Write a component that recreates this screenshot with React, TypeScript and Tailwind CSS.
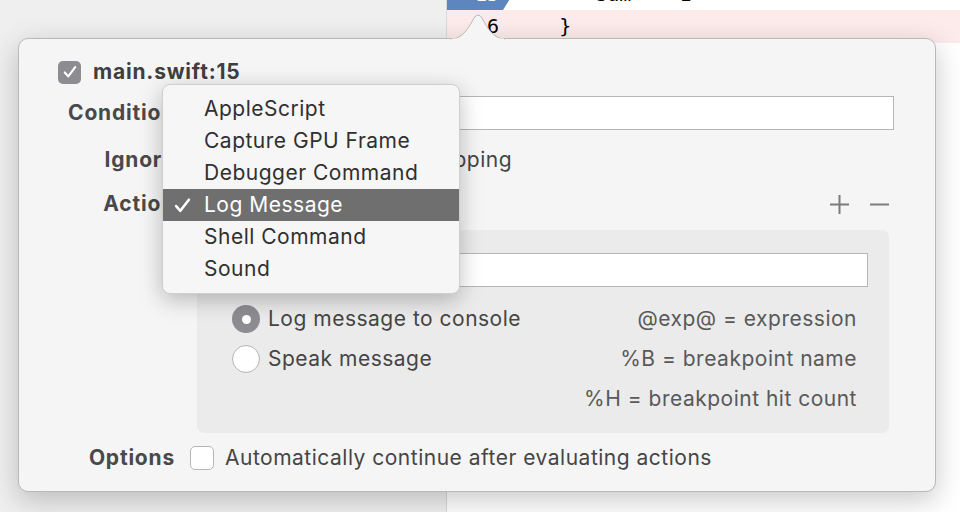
const MENU_ITEMS = [
  "AppleScript",
  "Capture GPU Frame",
  "Debugger Command",
  "Log Message",
  "Shell Command",
  "Sound",
];

const SELECTED = "Log Message";

export default function App() {
  return (
    <div className="relative flex h-[512px] w-[960px] overflow-hidden bg-white font-['Inter',sans-serif] text-[21px] leading-[24px] tracking-[0.5px] text-[#454545]">
      <div className="w-[447px] shrink-0 border-r border-[#d9d9d9] bg-[#efefef]" />
      <Editor />
      <Popover />
    </div>
  );
}

function Editor() {
  return (
    <div className="flex flex-1 flex-col font-['DejaVu_Sans_Mono',monospace] text-[20px] leading-[32px] tracking-normal text-black">
      <div className="-mt-[22px] flex h-[32px]">
        <div className="relative w-[64px] shrink-0">
          <svg className="absolute inset-0" width="66" height="32" viewBox="0 0 66 32">
            <path d="M0 0 H56 L66 16 L56 32 H0 Z" fill="#5d86bf" />
          </svg>
          <span className="relative block pr-[12px] text-right text-white">15</span>
        </div>
        <pre className="pl-[12px] font-['DejaVu_Sans_Mono',monospace]">{"      sum += 1"}</pre>
      </div>
      <div className="flex h-[33px] bg-[#fcebea]">
        <span className="block w-[64px] shrink-0 pr-[12px] text-right">16</span>
        <pre className="font-['DejaVu_Sans_Mono',monospace]">{"    }"}</pre>
      </div>
    </div>
  );
}

function Popover() {
  return (
    <div className="absolute left-[18px] top-[38px] h-[454px] w-[918px] rounded-[10px] border border-[#b9b9b9] bg-[#f5f5f5] shadow-[0_8px_28px_rgba(0,0,0,0.22)]">
      <svg
        className="absolute -top-[26px] left-[432px]"
        width="54"
        height="27"
        viewBox="0 0 54 27"
      >
        <path
          d="M0 26 C12 26 18 14 23 5 Q27 -1 31 5 C36 14 42 26 54 26 Z"
          fill="#f5f5f5"
        />
        <path
          d="M0 26 C12 26 18 14 23 5 Q27 -1 31 5 C36 14 42 26 54 26"
          fill="none"
          stroke="#b9b9b9"
          strokeWidth="1"
        />
        <rect x="1" y="25.5" width="52" height="2" fill="#f5f5f5" />
      </svg>

      <div className="flex flex-col pl-[39px] pt-[21px]">
        <div className="flex h-[24px] items-center gap-[12px]">
          <span className="flex h-[23px] w-[23px] items-center justify-center rounded-[5px] bg-[#8d8d91]">
            <CheckIcon className="h-[14px] w-[14px]" color="#ffffff" />
          </span>
          <span className="font-bold tracking-[0.8px] text-[#3f3f3f]">main.swift:15</span>
        </div>
      </div>

      <div className="mt-[12px] grid grid-cols-[156px_1fr] items-center gap-x-[15px] pr-[41px]">
        <Label>Condition</Label>
        <div className="h-[34px] border border-[#b6b6b6] bg-white" />
      </div>

      <div className="mt-[13px] grid grid-cols-[156px_1fr] items-center gap-x-[15px] pr-[41px]">
        <Label>Ignore</Label>
        <div className="flex h-[34px] items-center">
          <div className="h-[30px] w-[66px] border border-[#b6b6b6] bg-white" />
          <div className="ml-[4px] h-[30px] w-[16px] rounded-[4px] border border-[#c4c4c4] bg-white" />
          <span className="ml-[9px]">times before stopping</span>
        </div>
      </div>

      <div className="mt-[11px] grid grid-cols-[156px_1fr] items-center gap-x-[15px] pr-[46px]">
        <Label>Action</Label>
        <div className="flex h-[32px] items-center">
          <div className="h-[28px] w-[180px] rounded-[5px] border border-[#c4c4c4] bg-white" />
          <div className="ml-auto flex items-center gap-[21px]">
            <svg width="19" height="19" viewBox="0 0 19 19">
              <path d="M9.5 0 V19 M0 9.5 H19" stroke="#7b7b7b" strokeWidth="2" />
            </svg>
            <svg width="19" height="19" viewBox="0 0 19 19">
              <path d="M0 9.5 H19" stroke="#7b7b7b" strokeWidth="2" />
            </svg>
          </div>
        </div>
      </div>

      <div className="ml-[178px] mr-[46px] mt-[10px] flex h-[203px] flex-col rounded-[7px] bg-[#ebebeb] px-[21px] pt-[23px]">
        <div className="h-[34px] border border-[#b6b6b6] bg-white" />
        <div className="mt-[18px] grid grid-cols-[1fr_auto] gap-y-[12px] pl-[14px] pr-[11px] leading-[28px]">
          <Radio checked label="Log message to console" />
          <span className="text-right text-[#595959]">@exp@ = expression</span>
          <Radio label="Speak message" />
          <span className="text-right text-[#595959]">%B = breakpoint name</span>
          <span />
          <span className="text-right text-[#595959]">%H = breakpoint hit count</span>
        </div>
      </div>

      <div className="mt-[13px] grid grid-cols-[156px_1fr] items-center gap-x-[15px]">
        <Label>Options</Label>
        <div className="flex items-center gap-[11px]">
          <span className="h-[24px] w-[24px] rounded-[5px] border border-[#b6b6b6] bg-white" />
          <span>Automatically continue after evaluating actions</span>
        </div>
      </div>

      <PopupMenu />
    </div>
  );
}

function Label({ children }: { children: React.ReactNode }) {
  return (
    <span className="text-right font-bold tracking-[0.8px] text-[#494949]">{children}</span>
  );
}

function Radio({ label, checked }: { label: string; checked?: boolean }) {
  return (
    <div className="flex items-center gap-[8px]">
      {checked ? (
        <span className="flex h-[28px] w-[28px] items-center justify-center rounded-full bg-[#8d8d91]">
          <span className="h-[9px] w-[9px] rounded-full bg-white" />
        </span>
      ) : (
        <span className="h-[28px] w-[28px] rounded-full border border-[#b4b4b4] bg-white" />
      )}
      <span>{label}</span>
    </div>
  );
}

function PopupMenu() {
  return (
    <div className="absolute left-[143px] top-[45px] w-[298px] rounded-[8px] border border-[#cfcfcf] bg-[#f6f6f6] py-[8px] text-[#303030] shadow-[0_6px_22px_rgba(0,0,0,0.25)]">
      {MENU_ITEMS.map((item) => {
        const selected = item === SELECTED;
        return (
          <div
            key={item}
            className={`relative flex h-[32px] items-center pl-[41px] ${
              selected ? "bg-[#6f6f6f] text-white" : ""
            }`}
          >
            {selected ? (
              <CheckIcon className="absolute left-[11px] h-[17px] w-[17px]" color="#ffffff" />
            ) : null}
            {item}
          </div>
        );
      })}
    </div>
  );
}

function CheckIcon({ className, color }: { className?: string; color: string }) {
  return (
    <svg className={className} viewBox="0 0 16 16" fill="none">
      <path
        d="M2 8.5 L6 13 L14 2.5"
        stroke={color}
        strokeWidth="2.4"
        strokeLinecap="round"
        strokeLinejoin="round"
      />
    </svg>
  );
}
